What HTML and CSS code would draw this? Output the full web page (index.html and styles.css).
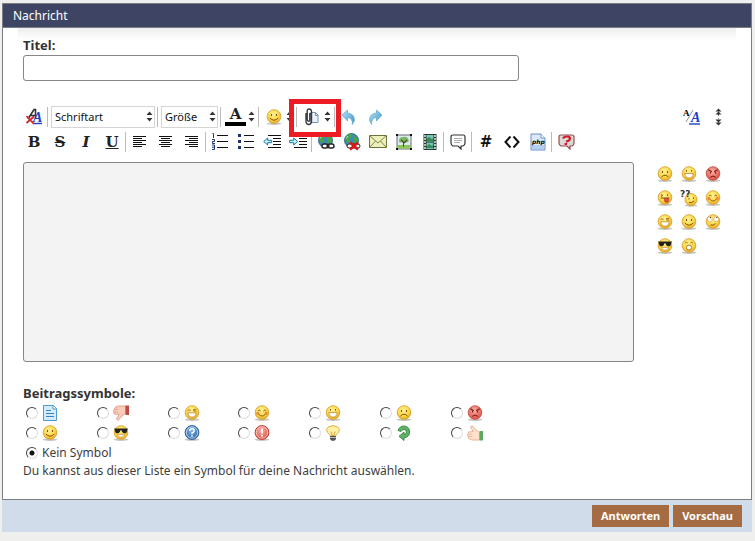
FILE: index.html
```html
<!DOCTYPE html>
<html lang="de">
<head>
    <meta charset="UTF-8">
    <meta name="viewport" content="width=device-width, initial-scale=1.0">
    <title>Nachricht</title>
    <link rel="stylesheet" href="styles.css">
</head>
<body>
    <!-- Shared icons -->
    <svg class="sprite" width="0" height="0" aria-hidden="true">
        <defs>
            <radialGradient id="yellow" cx="45%" cy="35%" r="65%">
                <stop offset="0" stop-color="#fff29a"/>
                <stop offset="0.6" stop-color="#fbd94a"/>
                <stop offset="1" stop-color="#e9ad24"/>
            </radialGradient>
            <radialGradient id="red" cx="45%" cy="35%" r="65%">
                <stop offset="0" stop-color="#fbb0a4"/>
                <stop offset="1" stop-color="#dd5145"/>
            </radialGradient>
            <radialGradient id="blue" cx="45%" cy="35%" r="65%">
                <stop offset="0" stop-color="#7db2e6"/>
                <stop offset="1" stop-color="#2d66a8"/>
            </radialGradient>
            <linearGradient id="arrow" x1="0" y1="0" x2="1" y2="1">
                <stop offset="0" stop-color="#b5e4f7"/>
                <stop offset="1" stop-color="#3f93c4"/>
            </linearGradient>
            <symbol id="face" viewBox="0 0 16 16">
                <ellipse cx="8" cy="14.6" rx="7.5" ry="1.3" fill="#c4c4c0"/>
                <circle cx="8" cy="7.5" r="6.8" fill="url(#yellow)" stroke="#d59b25" stroke-width="0.8"/>
            </symbol>
            <symbol id="smile" viewBox="0 0 16 16">
                <use href="#face"/>
                <path d="M5.5 5v2M10.5 5v2" stroke="#81510d" stroke-width="1.1"/>
                <path d="M3.8 9q4.2 4.4 8.4 0" fill="none" stroke="#81510d"/>
            </symbol>
            <symbol id="sad" viewBox="0 0 16 16">
                <use href="#face"/>
                <path d="M5.5 5v2M10.5 5v2" stroke="#81510d" stroke-width="1.1"/>
                <path d="M4.5 11q3.5-3.6 7 0" fill="none" stroke="#81510d"/>
            </symbol>
            <symbol id="grin" viewBox="0 0 16 16">
                <use href="#face"/>
                <path d="M5.5 4v1.6M10.5 4v1.6" stroke="#81510d"/>
                <path d="M3.8 7.5h8.4q-.4 4.6-4.2 4.6t-4.2-4.6z" fill="#fff" stroke="#b77a1c" stroke-width="0.7"/>
            </symbol>
            <symbol id="laugh" viewBox="0 0 16 16">
                <use href="#face"/>
                <path d="M3.6 5.6q1.6-1.6 3 0M9 5l3.3-.8M9.2 5.8l3 .4" fill="none" stroke="#81510d" stroke-width="0.8"/>
                <path d="M3.8 7.8h8.4q-.4 4.4-4.2 4.4t-4.2-4.4z" fill="#fff" stroke="#b77a1c" stroke-width="0.7"/>
            </symbol>
            <symbol id="happy" viewBox="0 0 16 16">
                <use href="#face"/>
                <circle cx="3.8" cy="8.4" r="1.6" fill="#f18b3c"/>
                <circle cx="12.2" cy="8.4" r="1.6" fill="#f18b3c"/>
                <path d="M4 6q1.3-1.8 2.6 0M9.4 6q1.3-1.8 2.6 0M4.8 9.4q3.2 3.2 6.4 0" fill="none" stroke="#81510d" stroke-width="0.9"/>
            </symbol>
            <symbol id="tongue" viewBox="0 0 16 16">
                <use href="#face"/>
                <path d="M4 4.5l1.8 1-1.8 1M10.5 4v2" fill="none" stroke="#81510d" stroke-width="0.9"/>
                <path d="M3.8 8h8.4" stroke="#81510d"/>
                <path d="M7.4 8.4h4.4v2q-.4 2-2.2 2t-2.2-2z" fill="#dc5441" stroke="#a63322" stroke-width="0.6"/>
            </symbol>
            <symbol id="rolleyes" viewBox="0 0 16 16">
                <use href="#face"/>
                <circle cx="4.8" cy="5" r="2.5" fill="#fff" stroke="#bd8a29" stroke-width="0.5"/>
                <circle cx="11.2" cy="5" r="2.5" fill="#fff" stroke="#bd8a29" stroke-width="0.5"/>
                <circle cx="5.4" cy="3.6" r="0.7" fill="#4a3511"/>
                <circle cx="11.8" cy="3.6" r="0.7" fill="#4a3511"/>
                <path d="M5.4 11q3 1 5-1.4" fill="none" stroke="#81510d"/>
            </symbol>
            <symbol id="cool" viewBox="0 0 16 16">
                <use href="#face"/>
                <path d="M1 3.4h14l-.6 1-.8 3q-2.6 2-4.4-.4L8.4 5.2h-.8L6.8 7q-1.8 2.4-4.4.4l-.8-3z" fill="#25221c"/>
                <path d="M4.4 9.4h7.2q-.8 2.9-3.6 2.9t-3.6-2.9z" fill="#fff" stroke="#b77a1c" stroke-width="0.6"/>
            </symbol>
            <symbol id="shock" viewBox="0 0 16 16">
                <use href="#face"/>
                <path d="M4.2 5q1.2-1.4 2.4 0M9.4 5q1.2-1.4 2.4 0" fill="none" stroke="#81510d" stroke-width="0.9"/>
                <ellipse cx="8" cy="9.6" rx="2.6" ry="2.5" fill="#fff" stroke="#a36c18" stroke-width="0.9"/>
            </symbol>
            <symbol id="angry" viewBox="0 0 16 16">
                <ellipse cx="8" cy="14.6" rx="7.5" ry="1.3" fill="#c4c4c0"/>
                <circle cx="8" cy="7.5" r="6.8" fill="url(#red)" stroke="#c1473e" stroke-width="0.8"/>
                <path d="M3.4 3.8l3.4 2M12.6 3.8l-3.4 2M5.5 6v1.6M10.5 6v1.6" stroke="#701713" stroke-width="1.1"/>
                <path d="M5.2 11.4q2.8-2.8 5.6 0" fill="none" stroke="#701713"/>
            </symbol>
            <symbol id="updown" viewBox="0 0 7 11">
                <path d="M.5 4l3-3.5 3 3.5zM.5 7l3 3.5 3-3.5z" fill="#333"/>
            </symbol>
            <symbol id="globe" viewBox="0 0 18 18">
                <circle cx="8.5" cy="7.5" r="7" fill="#3d86bf" stroke="#1f5a76" stroke-width="0.8"/>
                <path d="M4 2.4q3-2 6-1.2L9 4 6.4 5.2 7.4 8 5 10.4 2 7.2zM11 3.4l3.2 1.4 1 3-2.4 3.6-2.4-2 .6-2.4-1.6-1z" fill="#48a545"/>
                <path d="M3 5.6l2-2.6" stroke="#c9edf4" stroke-width="0.9"/>
            </symbol>
        </defs>
    </svg>

    <form class="message-form" onsubmit="return false">
        <div class="panel">
            <h2 class="panel-title">Nachricht</h2>
            <div class="panel-body">
                <div class="title-field">
                    <label for="title">Titel:</label>
                    <input type="text" id="title" class="title-input">
                </div>

                <div class="toolbar">
                    <div class="toolbar-row">
                        <button type="button" class="tool" aria-label="Formatierung entfernen">
                            <svg width="18" height="18" viewBox="0 0 18 18">
                                <path d="M3 11l6-9.5h1.5V11M5 7.5h5" fill="none" stroke="#333" stroke-width="1.6"/>
                                <text x="8" y="14" class="glyph-a blue">A</text>
                                <path d="M8 15.5h9" stroke="#1c3fc9" stroke-width="1.4"/>
                                <path d="M1.5 8l7.5 8M9 8.5L1.5 15" stroke="#d92525" stroke-width="1.8"/>
                            </svg>
                        </button>
                        <span class="separator"></span>
                        <span class="select-box">
                            <select class="font-select" aria-label="Schriftart"><option>Schriftart</option></select>
                            <svg class="select-arrow" width="7" height="11"><use href="#updown"/></svg>
                        </span>
                        <span class="separator"></span>
                        <span class="select-box">
                            <select class="size-select" aria-label="Größe"><option>Größe</option></select>
                            <svg class="select-arrow" width="7" height="11"><use href="#updown"/></svg>
                        </span>
                        <span class="separator"></span>
                        <button type="button" class="tool wide" aria-label="Textfarbe">
                            <span class="color-letter">A</span>
                            <svg width="7" height="11"><use href="#updown"/></svg>
                        </button>
                        <span class="separator"></span>
                        <button type="button" class="tool wide emoticons" aria-label="Smileys">
                            <svg width="16" height="16"><use href="#smile"/></svg>
                            <svg width="7" height="11"><use href="#updown"/></svg>
                        </button>
                        <span class="separator"></span>
                        <button type="button" class="tool wide highlight" aria-label="Anhänge">
                            <svg width="16" height="18" viewBox="0 0 16 18">
                                <path d="M6.5 4.5h5L14 7v7.5H6.5z" fill="#e9f1fb" stroke="#7b93b8"/>
                                <path d="M11.5 4.5v3H14" fill="none" stroke="#7b93b8"/>
                                <path d="M2 5v8.5q.3 3 2.8 3t2.7-3v-10Q7.3 1 5.2 1t-2 2.5v8q.2 1.8 1.4 1.8t1.2-1.8V5" fill="none" stroke="#3b3b3b" stroke-width="1.4"/>
                            </svg>
                            <svg width="7" height="11"><use href="#updown"/></svg>
                        </button>
                        <span class="separator"></span>
                        <button type="button" class="tool" aria-label="Rückgängig">
                            <svg width="16" height="16" viewBox="0 0 16 16">
                                <path d="M1 6l5.5-5v3q7 .5 7 7.5l-2.2 4Q12 9 6.5 8.6V12z" fill="url(#arrow)" stroke="#5ba6cf" stroke-width="0.7"/>
                            </svg>
                        </button>
                        <button type="button" class="tool" aria-label="Wiederherstellen">
                            <svg width="16" height="16" viewBox="0 0 16 16">
                                <path d="M15 6L9.5 1v3q-7 .5-7 7.5l2.2 4Q4 9 9.5 8.6V12z" fill="url(#arrow)" stroke="#5ba6cf" stroke-width="0.7"/>
                            </svg>
                        </button>
                        <div class="toolbar-end">
                            <button type="button" class="tool" aria-label="Editor wechseln">
                                <svg width="18" height="18" viewBox="0 0 18 18">
                                    <text x="0" y="8" class="glyph-small">A</text>
                                    <text x="8" y="14" class="glyph-a blue">A</text>
                                    <path d="M6 16h11" stroke="#1c3fc9" stroke-width="1.4"/>
                                    <path d="M3 14l7-12" stroke="#777" stroke-width="0.8"/>
                                </svg>
                            </button>
                            <button type="button" class="tool" aria-label="Höhe des Editors ändern">
                                <svg width="7" height="18" viewBox="0 0 7 18">
                                    <path d="M.5 3.5l3-3 3 3zM.5 6.5l3-3 3 3zM3 6h1v1.5H3zM.5 11.5l3 3 3-3zM.5 14.5l3 3 3-3zM3 10.5h1V12H3z" fill="#333"/>
                                </svg>
                            </button>
                        </div>
                    </div>

                    <div class="toolbar-row">
                        <button type="button" class="tool letter" aria-label="Fett">B</button>
                        <button type="button" class="tool letter strike" aria-label="Durchgestrichen">S</button>
                        <button type="button" class="tool letter italic" aria-label="Kursiv">I</button>
                        <button type="button" class="tool letter underline" aria-label="Unterstrichen">U</button>
                        <span class="separator"></span>
                        <button type="button" class="tool" aria-label="Linksbündig">
                            <svg width="14" height="12" viewBox="0 0 14 12"><path d="M0 .5h13M0 2.5h9M0 4.5h13M0 6.5h9M0 8.5h13M0 10.5h9" stroke="#111"/></svg>
                        </button>
                        <button type="button" class="tool" aria-label="Zentriert">
                            <svg width="14" height="12" viewBox="0 0 14 12"><path d="M0 .5h13M2 2.5h9M0 4.5h13M2 6.5h9M0 8.5h13M2 10.5h9" stroke="#111"/></svg>
                        </button>
                        <button type="button" class="tool" aria-label="Rechtsbündig">
                            <svg width="14" height="12" viewBox="0 0 14 12"><path d="M0 .5h13M4 2.5h9M0 4.5h13M4 6.5h9M0 8.5h13M4 10.5h9" stroke="#111"/></svg>
                        </button>
                        <span class="separator"></span>
                        <button type="button" class="tool" aria-label="Nummerierte Liste">
                            <svg width="16" height="17" viewBox="0 0 16 17">
                                <path d="M5 2.5h11M5 8.5h11M5 14.5h11" stroke="#111"/>
                                <path d="M.5.5h1V5M0 6.5h2.5v2H.5v2H3M0 12h2.5v4.5H0M0 14.2h2.5" fill="none" stroke="#21336c"/>
                            </svg>
                        </button>
                        <button type="button" class="tool" aria-label="Aufzählung">
                            <svg width="16" height="17" viewBox="0 0 16 17">
                                <path d="M6 2.5h10M6 8.5h10M6 14.5h10" stroke="#111"/>
                                <path d="M0 1h3v3H0zM0 7h3v3H0zM0 13h3v3H0z" fill="#21336c"/>
                            </svg>
                        </button>
                        <button type="button" class="tool" aria-label="Einzug verkleinern">
                            <svg width="18" height="15" viewBox="0 0 18 15">
                                <path d="M5 1.5h13M10 4.5h8M10 7.5h8M10 10.5h8M5 13.5h13" stroke="#111"/>
                                <path d="M.7 7.5l4-3.5v2.3h4v2.4h-4V11z" fill="#c9f2fb" stroke="#1678a5"/>
                            </svg>
                        </button>
                        <button type="button" class="tool" aria-label="Einzug vergrößern">
                            <svg width="18" height="15" viewBox="0 0 18 15">
                                <path d="M5 1.5h13M10 4.5h8M10 7.5h8M10 10.5h8M5 13.5h13" stroke="#111"/>
                                <path d="M8.7 7.5l-4-3.5v2.3h-4v2.4h4V11z" fill="#c9f2fb" stroke="#1678a5"/>
                            </svg>
                        </button>
                        <span class="separator"></span>
                        <button type="button" class="tool" aria-label="Link einfügen">
                            <svg width="18" height="18" viewBox="0 0 18 18">
                                <use href="#globe"/>
                                <rect x="5" y="11" width="6" height="4" rx="2" fill="#fff" stroke="#222" stroke-width="1.4"/>
                                <rect x="11" y="11" width="6" height="4" rx="2" fill="#fff" stroke="#222" stroke-width="1.4"/>
                                <path d="M9 13h4" stroke="#222"/>
                            </svg>
                        </button>
                        <button type="button" class="tool" aria-label="Link entfernen">
                            <svg width="18" height="18" viewBox="0 0 18 18">
                                <use href="#globe"/>
                                <rect x="4" y="11" width="13" height="4" rx="2" fill="#fff" stroke="#222"/>
                                <path d="M7 9.5l8 7M15 9.5l-8 7" stroke="#dc1717" stroke-width="2.6"/>
                            </svg>
                        </button>
                        <button type="button" class="tool" aria-label="E-Mail einfügen">
                            <svg width="18" height="13" viewBox="0 0 18 13">
                                <path d="M.5.5h17v12H.5z" fill="#eef0bb" stroke="#69763a"/>
                                <path d="M1 1l8 7 8-7M1 12l5.5-6M17 12l-5.5-6" fill="none" stroke="#7d8a49"/>
                            </svg>
                        </button>
                        <button type="button" class="tool" aria-label="Grafik einfügen">
                            <svg width="16" height="16" viewBox="0 0 16 16">
                                <path d="M1 1h14v14H1z" fill="#d9efef" stroke="#667"/>
                                <path d="M1.5 11h13v3.5h-13z" fill="#8cc653"/>
                                <path d="M3 7q0-4 4-4 4-1 5 1.5 2 3-1 4H5Q3 9 3 7z" fill="#7db662"/>
                                <path d="M7.5 12.5V8L5 6M8 9l3-3" fill="none" stroke="#5b4224" stroke-width="1.1"/>
                                <path d="M0 0h2v2H0zM14 0h2v2h-2zM0 14h2v2H0zM14 14h2v2h-2z" fill="#111"/>
                            </svg>
                        </button>
                        <button type="button" class="tool" aria-label="Video einfügen">
                            <svg width="14" height="16" viewBox="0 0 14 16">
                                <path d="M1 1h12v14H1z" fill="#71c5b8"/>
                                <path d="M3 5l3-2 3 2 2-1v3H3zM3 13l3-3 3 2 2-2v4H3z" fill="#378b55"/>
                                <path d="M2 0v16M12 0v16" stroke="#26382f" stroke-width="3"/>
                                <path d="M2 1v15M12 1v15" stroke="#f5f5f5" stroke-width="1.4" stroke-dasharray="2 1"/>
                                <path d="M3 .5h8M3 8h8M3 15.5h8" stroke="#26382f"/>
                            </svg>
                        </button>
                        <span class="separator"></span>
                        <button type="button" class="tool" aria-label="Zitat einfügen">
                            <svg width="16" height="16" viewBox="0 0 16 16">
                                <path d="M3 1h10q2 0 2 2v6q0 2-2 3h-2v3l-3-3H3q-2-1-2-3V3q0-2 2-2z" fill="#fff" stroke="#333" stroke-width="1.2"/>
                                <path d="M4 4.5h8M4 6.5h8M4 8.5h6" stroke="#aaa"/>
                            </svg>
                        </button>
                        <span class="separator"></span>
                        <button type="button" class="tool hash" aria-label="Code einfügen">#</button>
                        <button type="button" class="tool" aria-label="HTML einfügen">
                            <svg width="16" height="14" viewBox="0 0 16 14"><path d="M6.5 1.5L1.5 7l5 5.5M9.5 1.5l5 5.5-5 5.5" fill="none" stroke="#111" stroke-width="2"/></svg>
                        </button>
                        <button type="button" class="tool" aria-label="PHP einfügen">
                            <svg width="16" height="18" viewBox="0 0 16 18">
                                <path d="M1 1h10l4 4v12H1z" fill="#dce9fa" stroke="#6b8fc7"/>
                                <path d="M2 12h12v4H2z" fill="#b2cef1"/>
                                <path d="M11 1v4h4" fill="#fff" stroke="#6b8fc7"/>
                                <text x="2" y="11" class="glyph-php">php</text>
                            </svg>
                        </button>
                        <span class="separator"></span>
                        <button type="button" class="tool" aria-label="Hilfe">
                            <svg width="17" height="16" viewBox="0 0 17 16">
                                <path d="M3 1h11q2 0 2 2v6q0 2-2 3h-2v3l-3-3H3q-2-1-2-3V3q0-2 2-2z" fill="#d9d9d9" stroke="#984d4d" stroke-width="1.2"/>
                                <path d="M5 4.5q1-2 4-2t3 2-4 3.2" fill="none" stroke="#d21c25" stroke-width="2.2"/>
                                <path d="M6.5 9H9v2H6.5z" fill="#d21c25"/>
                            </svg>
                        </button>
                    </div>
                </div>

                <div class="editor">
                    <textarea class="editor-text" aria-label="Nachricht"></textarea>
                    <div class="smilies">
                        <button type="button" class="smiley" aria-label="Traurig"><svg width="16" height="16"><use href="#sad"/></svg></button>
                        <button type="button" class="smiley" aria-label="Grinsen"><svg width="16" height="16"><use href="#grin"/></svg></button>
                        <button type="button" class="smiley" aria-label="Wütend"><svg width="16" height="16"><use href="#angry"/></svg></button>
                        <button type="button" class="smiley" aria-label="Zunge"><svg width="16" height="16"><use href="#tongue"/></svg></button>
                        <button type="button" class="smiley" aria-label="Verwirrt">
                            <svg width="18" height="18" viewBox="0 0 18 18">
                                <ellipse cx="11" cy="16.5" rx="6.5" ry="1.2" fill="#c4c4c0"/>
                                <circle cx="11" cy="10.5" r="6" fill="url(#yellow)" stroke="#d59b25" stroke-width="0.8"/>
                                <path d="M9 9v1.5M13.5 8.5V10M9 13.5q3 1 5-1.5" fill="none" stroke="#81510d"/>
                                <text x="0" y="8" class="glyph-question">??</text>
                            </svg>
                        </button>
                        <button type="button" class="smiley" aria-label="Fröhlich"><svg width="16" height="16"><use href="#happy"/></svg></button>
                        <button type="button" class="smiley" aria-label="Lachen"><svg width="16" height="16"><use href="#laugh"/></svg></button>
                        <button type="button" class="smiley" aria-label="Lächeln"><svg width="16" height="16"><use href="#smile"/></svg></button>
                        <button type="button" class="smiley" aria-label="Augenrollen"><svg width="16" height="16"><use href="#rolleyes"/></svg></button>
                        <button type="button" class="smiley" aria-label="Cool"><svg width="16" height="16"><use href="#cool"/></svg></button>
                        <button type="button" class="smiley" aria-label="Erstaunt"><svg width="16" height="16"><use href="#shock"/></svg></button>
                    </div>
                </div>

                <fieldset class="post-icons">
                    <legend>Beitragssymbole:</legend>
                    <div class="icon-grid">
                        <label class="icon-choice"><input type="radio" name="icon" aria-label="Beitrag">
                            <svg width="16" height="16" viewBox="0 0 16 16">
                                <path d="M1.5.5h10l3 3v12h-13z" fill="#d3ebfb" stroke="#4d9ad0"/>
                                <path d="M11 .5V4h3.5" fill="#fff" stroke="#4d9ad0"/>
                                <path d="M4 5.5h5M4 8.5h8M4 11.5h8" stroke="#3683bd"/>
                            </svg>
                        </label>
                        <label class="icon-choice"><input type="radio" name="icon" aria-label="Daumen runter">
                            <svg width="16" height="16" viewBox="0 0 16 16">
                                <path d="M12.5 1H5L2 2.5.7 6l.5 3L6 9.5 3.5 14 5 15.5 9 11l3.5-2.5z" fill="#fbcdb9" stroke="#df9b86" stroke-width="0.9"/>
                                <path d="M2 4.5h3M1.5 7H5" stroke="#df9b86" stroke-width="0.8"/>
                                <path d="M12.5.5H16V10h-3.5z" fill="#bd4c48"/>
                            </svg>
                        </label>
                        <label class="icon-choice"><input type="radio" name="icon" aria-label="Lachen"><svg width="16" height="16"><use href="#laugh"/></svg></label>
                        <label class="icon-choice"><input type="radio" name="icon" aria-label="Fröhlich"><svg width="16" height="16"><use href="#happy"/></svg></label>
                        <label class="icon-choice"><input type="radio" name="icon" aria-label="Grinsen"><svg width="16" height="16"><use href="#grin"/></svg></label>
                        <label class="icon-choice"><input type="radio" name="icon" aria-label="Traurig"><svg width="16" height="16"><use href="#sad"/></svg></label>
                        <label class="icon-choice"><input type="radio" name="icon" aria-label="Wütend"><svg width="16" height="16"><use href="#angry"/></svg></label>
                        <label class="icon-choice"><input type="radio" name="icon" aria-label="Lächeln"><svg width="16" height="16"><use href="#smile"/></svg></label>
                        <label class="icon-choice"><input type="radio" name="icon" aria-label="Cool"><svg width="16" height="16"><use href="#cool"/></svg></label>
                        <label class="icon-choice"><input type="radio" name="icon" aria-label="Frage">
                            <svg width="16" height="16" viewBox="0 0 16 16">
                                <ellipse cx="8" cy="14.6" rx="7.5" ry="1.3" fill="#c4c4c0"/>
                                <circle cx="8" cy="7.5" r="6.9" fill="url(#blue)" stroke="#2b5f9b"/>
                                <circle cx="8" cy="7.5" r="5.7" fill="none" stroke="#d8e9fa" stroke-width="0.8"/>
                                <path d="M5.8 6q0-2.2 2.2-2.2T10.2 6Q10.2 7 8 8v1.2M8 10.2v1.5" fill="none" stroke="#fff" stroke-width="1.5"/>
                            </svg>
                        </label>
                        <label class="icon-choice"><input type="radio" name="icon" aria-label="Ausruf">
                            <svg width="16" height="16" viewBox="0 0 16 16">
                                <ellipse cx="8" cy="14.6" rx="7.5" ry="1.3" fill="#c4c4c0"/>
                                <circle cx="8" cy="7.5" r="6.9" fill="url(#red)" stroke="#c33f38"/>
                                <circle cx="8" cy="7.5" r="5.7" fill="none" stroke="#fbd5cf" stroke-width="0.8"/>
                                <path d="M8 3.5v5M8 9.8v1.8" stroke="#fff" stroke-width="1.9"/>
                            </svg>
                        </label>
                        <label class="icon-choice"><input type="radio" name="icon" aria-label="Idee">
                            <svg width="16" height="16" viewBox="0 0 16 16">
                                <path d="M5.5 11Q5 9.5 2.5 7.5 0 4 3.5 1.8 8-.6 12.5 1.8 16 4 13.5 7.5 11 9.5 10.5 11z" fill="#fff2a8" stroke="#e0b13c"/>
                                <path d="M6 6.5l1 4h2l1-4" fill="none" stroke="#d89a2b" stroke-width="0.9"/>
                                <path d="M5 11h6v3l-1.5 1.7h-3L5 14z" fill="#555"/>
                                <path d="M5 12.5h6" stroke="#bbb"/>
                            </svg>
                        </label>
                        <label class="icon-choice"><input type="radio" name="icon" aria-label="Antwort">
                            <svg width="16" height="16" viewBox="0 0 16 16">
                                <path d="M2 5.5Q3.5 1 8 1q5.5.5 5.7 6-.2 5-5.7 5.8v2.7L3 11.3 8 7v2.4q2.5-.4 2.5-2.4Q10 4.5 8 4.5 6 4.5 5 6.5z" fill="#60b364" stroke="#378447" stroke-width="0.9"/>
                            </svg>
                        </label>
                        <label class="icon-choice"><input type="radio" name="icon" aria-label="Daumen hoch">
                            <svg width="16" height="16" viewBox="0 0 16 16">
                                <path d="M12.5 15H5l-3.5-1.5L.7 10l.8-3L6 6.5 3.5 2 5 .5 9 5l3.5 2.5z" fill="#fde0cb" stroke="#e6ac91" stroke-width="0.9"/>
                                <path d="M1.5 9H5M1.7 11.5h3.5" stroke="#e6ac91" stroke-width="0.8"/>
                                <path d="M12.5 6H16v9.5h-3.5z" fill="#5fa860"/>
                            </svg>
                        </label>
                    </div>
                    <label class="icon-choice"><input type="radio" name="icon" checked> Kein Symbol</label>
                    <p class="hint">Du kannst aus dieser Liste ein Symbol für deine Nachricht auswählen.</p>
                </fieldset>
            </div>
        </div>

        <div class="form-footer">
            <button type="submit" class="action">Antworten</button>
            <button type="button" class="action">Vorschau</button>
        </div>
    </form>
</body>
</html>
```

FILE: styles.css
```css
* {
    margin: 0;
    padding: 0;
    box-sizing: border-box;
}

body {
    font-family: 'Noto Sans', sans-serif;
    font-size: 12px;
    line-height: 18px;
    color: #3e3e3e;
    background-color: #efefee;
    padding: 3px;
    padding-left: 2px;
}

button {
    border: none;
    background: none;
    color: inherit;
    cursor: pointer;
}

svg {
    display: block;
    flex: none;
}

.sprite {
    position: absolute;
}

.panel {
    background-color: #fff;
    border: 1px solid #7d7d84;
}

.panel-title {
    height: 24px;
    padding: 0 10px;
    border-bottom: 1px solid #7d7d84;
    background-color: #3e4564;
    color: #fff;
    font-size: 12px;
    font-weight: normal;
    line-height: 24px;
}

.panel-body {
    padding: 8px 20px 19px;
    background: linear-gradient(#eeeef0, #fff) 15px 0 / calc(100% - 30px) 12px no-repeat;
}

/* Title */
.title-field label,
.post-icons legend {
    display: block;
    font-size: 13px;
    font-weight: bold;
    color: #333;
}

.title-input {
    display: block;
    width: 70%;
    height: 26px;
    margin-top: 1px;
    padding: 0 6px;
    border: 1px solid #85858a;
    border-radius: 3px;
    font: inherit;
}

/* Toolbar */
.toolbar {
    margin: 23px 0 8px -2px;
}

.toolbar-row {
    display: flex;
    align-items: center;
    height: 25px;
}

.toolbar-end {
    display: flex;
    margin-left: auto;
}

.tool {
    display: flex;
    align-items: center;
    justify-content: center;
    width: 26px;
    height: 24px;
}

.wide {
    justify-content: space-between;
    width: 36px;
    padding: 0 3px;
}

.emoticons {
    padding-left: 6px;
}

.highlight {
    position: relative;
    padding-left: 6px;
}

.highlight::after {
    content: "";
    position: absolute;
    inset: -6px -7px -8px -9px;
    border: 5px solid #ed1c24;
    pointer-events: none;
}

.separator {
    width: 1px;
    height: 20px;
    margin-right: 1px;
    background-color: #bbb;
}

.select-box {
    position: relative;
    margin: 0 2px;
}

.select-box select {
    display: block;
    height: 22px;
    padding: 0 3px;
    border: 1px solid #d5d5d5;
    background-color: #fff;
    color: #111;
    font: inherit;
    font-size: 11px;
    appearance: none;
}

.font-select {
    width: 104px;
}

.size-select {
    width: 57px;
}

.select-arrow {
    position: absolute;
    top: 5px;
    right: 2px;
    pointer-events: none;
}

.color-letter {
    width: 21px;
    border-bottom: 4px solid #000;
    font-family: 'DejaVu Serif', serif;
    font-size: 15px;
    font-weight: bold;
    line-height: 15px;
    color: #222;
}

.letter {
    font-family: 'DejaVu Serif', serif;
    font-size: 15px;
    font-weight: bold;
    color: #222;
}

.strike {
    text-decoration: line-through;
}

.italic {
    font-style: italic;
}

.underline {
    text-decoration: underline;
}

.hash {
    font-family: 'DejaVu Sans', sans-serif;
    font-size: 15px;
    font-weight: bold;
    color: #111;
}

.glyph-a,
.glyph-small {
    font-family: 'Liberation Serif', serif;
    font-weight: bold;
}

.glyph-a {
    font-size: 14px;
    font-style: italic;
}

.glyph-small {
    font-size: 9px;
}

.glyph-php {
    font: italic bold 6px 'DejaVu Sans', sans-serif;
}

.glyph-question {
    font: bold 9px 'DejaVu Sans', sans-serif;
    fill: #333;
}

.blue {
    fill: #1c3fc9;
}

/* Editor */
.editor {
    display: flex;
    gap: 19px;
}

.editor-text {
    flex: 1;
    min-width: 0;
    height: 200px;
    padding: 6px;
    border: 1px solid #85858a;
    border-radius: 3px;
    background-color: #f3f3f3;
    font: inherit;
    resize: none;
}

.smilies {
    display: grid;
    grid-template-columns: repeat(3, 24px);
    grid-auto-rows: 24px;
    align-content: start;
    width: 78px;
}

.smiley {
    display: flex;
    align-items: center;
    justify-content: center;
}

/* Post icons */
.post-icons {
    margin-top: 22px;
    border: none;
}

.icon-grid {
    display: grid;
    grid-template-columns: repeat(7, 10%);
    grid-auto-rows: 20px;
    margin: 1px 0;
}

.icon-choice {
    display: flex;
    align-items: center;
    gap: 4px;
    padding-left: 3px;
}

.icon-choice input {
    width: 12px;
    height: 12px;
    border: 1px solid;
    border-color: #444 #ddd #ddd #444;
    border-radius: 50%;
    background-color: #fff;
    appearance: none;
}

.icon-choice input:checked {
    background-image: radial-gradient(#111 2px, transparent 3px);
}

/* Footer */
.form-footer {
    display: flex;
    justify-content: flex-end;
    gap: 4px;
    padding: 5px 10px;
    background-color: #d0dce9;
}

.action {
    height: 22px;
    padding: 0 9px;
    background-color: #a56b43;
    color: #fff;
    font: inherit;
    font-size: 11px;
    font-weight: bold;
}
```
